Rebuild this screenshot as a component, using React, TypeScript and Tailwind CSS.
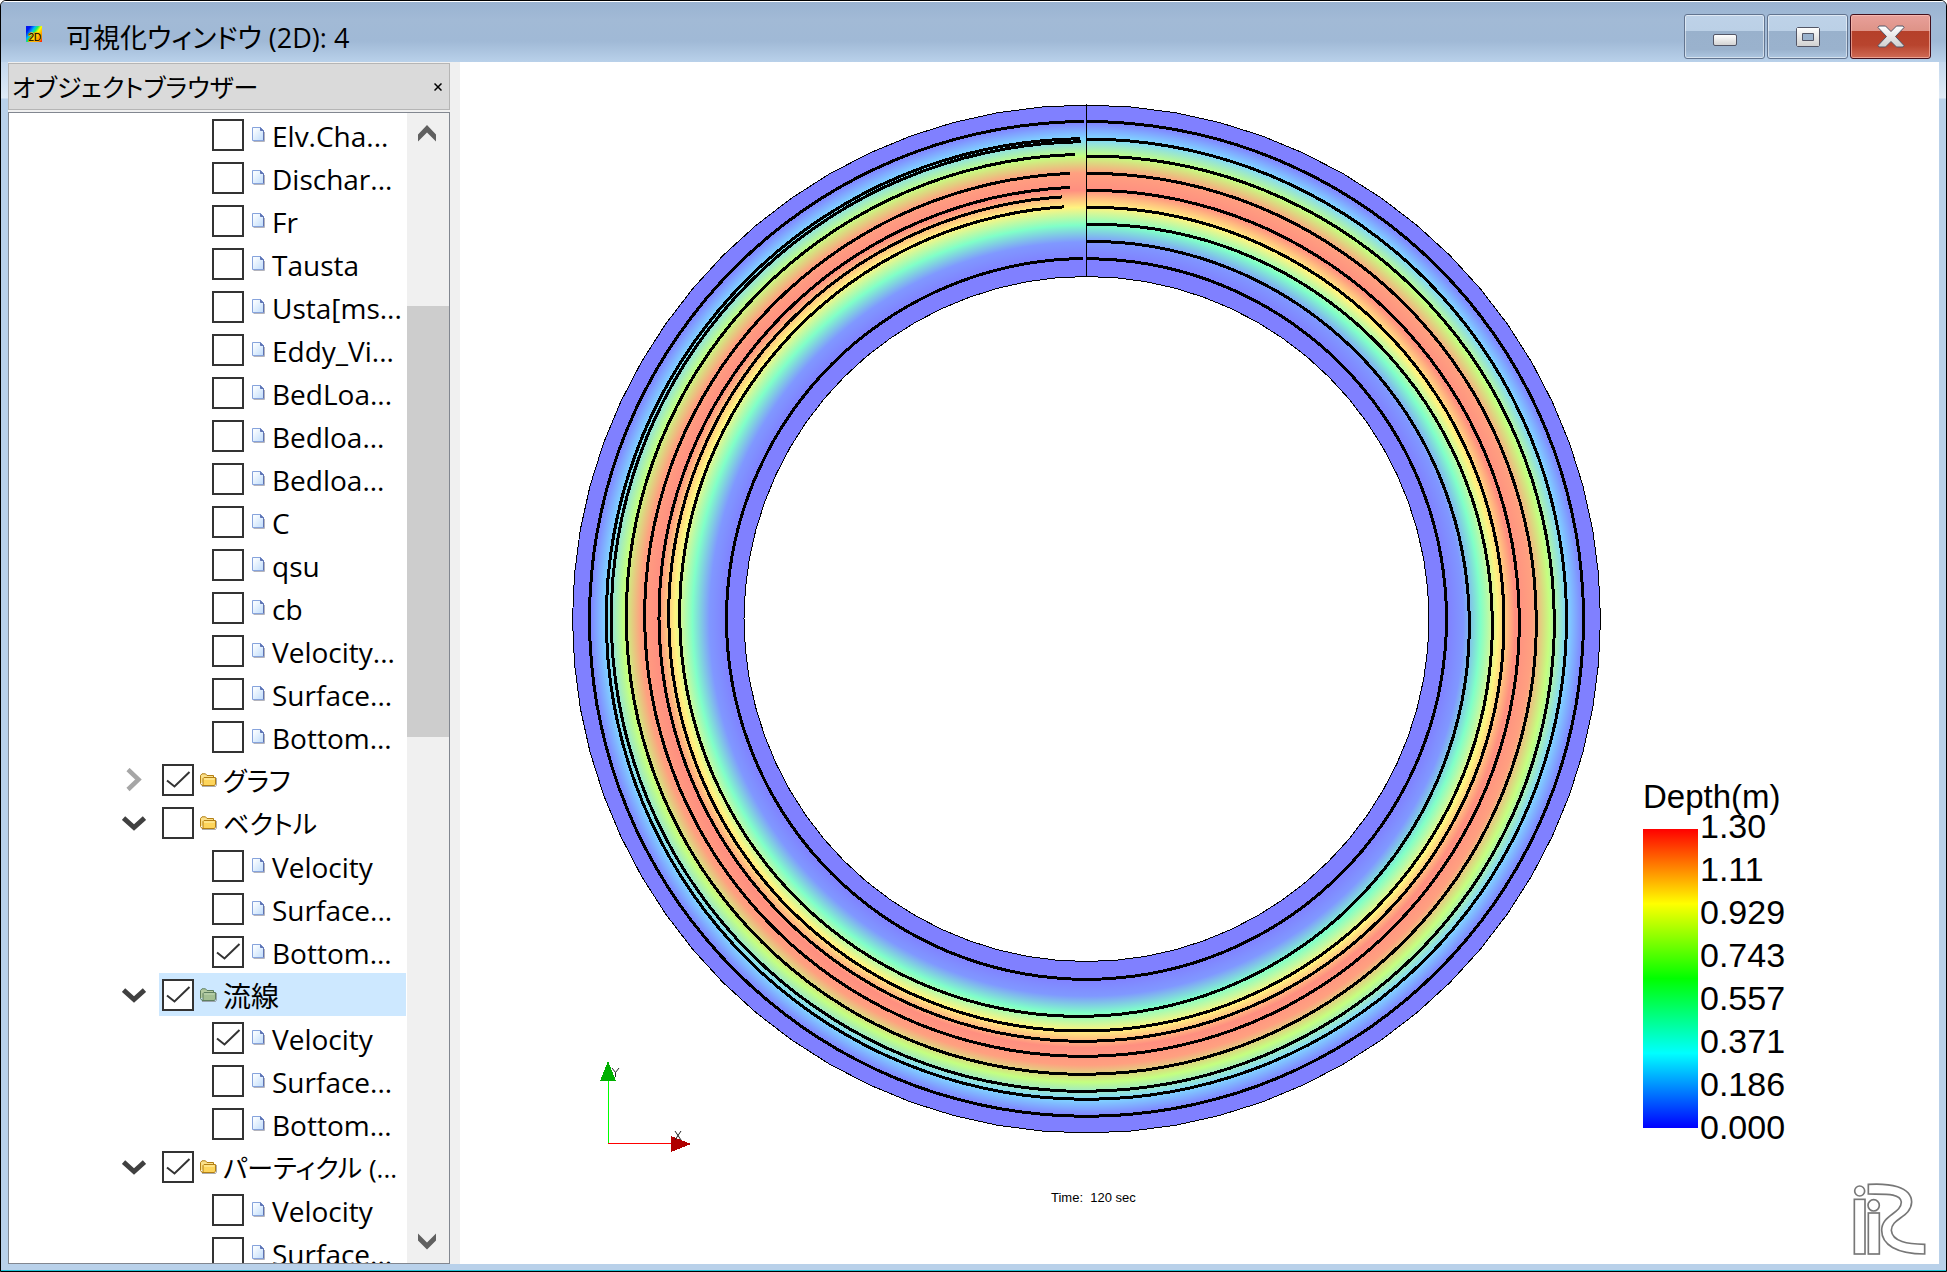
import React from "react";

type Row = {
  kind: "leaf" | "folder";
  label: string;
  checked?: boolean;
  open?: boolean;
  selected?: boolean;
};

const leaf = (label: string, checked = false): Row => ({ kind: "leaf", label, checked });

const rows: Row[] = [
  leaf("Elv.Cha..."),
  leaf("Dischar..."),
  leaf("Fr"),
  leaf("Tausta"),
  leaf("Usta[ms..."),
  leaf("Eddy_Vi..."),
  leaf("BedLoa..."),
  leaf("Bedloa..."),
  leaf("Bedloa..."),
  leaf("C"),
  leaf("qsu"),
  leaf("cb"),
  leaf("Velocity..."),
  leaf("Surface..."),
  leaf("Bottom..."),
  { kind: "folder", label: "グラフ", checked: true, open: false },
  { kind: "folder", label: "ベクトル", open: true },
  leaf("Velocity"),
  leaf("Surface..."),
  leaf("Bottom...", true),
  { kind: "folder", label: "流線", checked: true, open: true, selected: true },
  leaf("Velocity", true),
  leaf("Surface..."),
  leaf("Bottom..."),
  { kind: "folder", label: "パーティクル (...", checked: true, open: true },
  leaf("Velocity"),
  leaf("Surface..."),
];

const legend = ["1.30", "1.11", "0.929", "0.743", "0.557", "0.371", "0.186", "0.000"];

/* ---------- flow plot geometry ---------- */

const CX = 1086.5;
const CY = 619;
const OUTER = 514;
const INNER = 342.5;

// Radius of each streamline at 0, 90, 180, 270 and 360 degrees clockwise from the top.
const streams: { r: number[]; end: number }[] = [
  { r: [497.5, 497, 497.3, 497, 497.5], end: 359.7 },
  { r: [480, 480, 480.3, 480.2, 480.3], end: 359.2 },
  { r: [463, 467.8, 472.3, 475.2, 477.3], end: 359.3 },
  { r: [445.7, 449.8, 455.3, 460.2, 464.7], end: 358.6 },
  { r: [428.7, 432.8, 437.3, 441.8, 446], end: 357.9 },
  { r: [411.7, 417.5, 422.3, 427.5, 432], end: 357.8 },
  { r: [394.7, 405.8, 412, 417.8, 423], end: 356.7 },
  { r: [377.7, 382.8, 397.3, 406.8, 413], end: 356.9 },
  { r: [360.3, 360, 360.3, 360, 360.5], end: 359.5 },
];

const point = (deg: number, r: number) => {
  const a = (deg * Math.PI) / 180;
  return `${(CX + r * Math.sin(a)).toFixed(1)},${(CY - r * Math.cos(a)).toFixed(1)}`;
};

function radiusAt(r: number[], deg: number) {
  const i = Math.min(3, Math.floor(deg / 90));
  const t = deg / 90 - i;
  const p1 = r[i];
  const p2 = r[i + 1];
  const m1 = i > 0 ? (p2 - r[i - 1]) / 2 : p2 - p1;
  const m2 = i < 3 ? (r[i + 2] - p1) / 2 : p2 - p1;
  const t2 = t * t;
  const t3 = t2 * t;
  return (
    (2 * t3 - 3 * t2 + 1) * p1 + (t3 - 2 * t2 + t) * m1 + (3 * t2 - 2 * t3) * p2 + (t3 - t2) * m2
  );
}

function streamPoints(s: { r: number[]; end: number }) {
  const pts: string[] = [];
  for (let d = 0; d < s.end; d += 2.5) pts.push(point(d, radiusAt(s.r, d)));
  pts.push(point(s.end, radiusAt(s.r, s.end)));
  return pts.join(" ");
}

const ring = (r: number) =>
  "M" + Array.from({ length: 72 }, (_, i) => point(i * 5, r)).join("L") + "Z";

const depthStops: [number, string][] = [
  [342.5, "#8080ff"],
  [360, "#8080ff"],
  [377, "#8098ff"],
  [394, "#80ffc8"],
  [411.5, "#fff480"],
  [428.7, "#ff8f80"],
  [446, "#ffa080"],
  [463, "#c4ff80"],
  [480, "#80d8ff"],
  [497, "#8080ff"],
  [514, "#8080ff"],
];

function FlowPlot() {
  return (
    <svg className="block h-full w-full" viewBox="460 62 1479 1202" role="img" aria-label="Depth and streamlines">
      <defs>
        <radialGradient id="depth" gradientUnits="userSpaceOnUse" cx={CX} cy={CY} r={OUTER}>
          {depthStops.map(([r, c]) => (
            <stop key={r} offset={r / OUTER} stopColor={c} />
          ))}
        </radialGradient>
      </defs>
      <path d={ring(OUTER) + ring(INNER)} fill="url(#depth)" fillRule="evenodd" stroke="#000" strokeWidth="1" shapeRendering="crispEdges" />
      <path d="M1086.5 104V277" stroke="#000" strokeWidth="1" shapeRendering="crispEdges" />
      <g fill="none" stroke="#000" strokeWidth="3" shapeRendering="crispEdges">
        {streams.map((s, i) => (
          <polyline key={i} points={streamPoints(s)} />
        ))}
      </g>
      <g shapeRendering="crispEdges">
        <path d="M608.5 1144V1080" stroke="#00ff00" />
        <path d="M608 1143.5H672" stroke="#ff0000" />
        <path d="M608 1061L616 1081H600Z" fill="#00b000" />
        <path d="M691 1144L671 1136V1152Z" fill="#b00000" />
      </g>
      <g fill="none" stroke="#222" strokeWidth="1">
        <path d="M612 1068L615.5 1072.5L619 1068M615.5 1072.5V1077" />
        <path d="M675 1131L681 1140M681 1131L675 1140" />
      </g>
    </svg>
  );
}

/* ---------- icons ---------- */

function PageIcon() {
  return (
    <svg width="13" height="15" viewBox="0 0 13 15" className="shrink-0" aria-hidden="true">
      <defs>
        <linearGradient id="page" x1="0" y1="0" x2="1" y2="1">
          <stop offset="0.2" stopColor="#f6fbff" />
          <stop offset="1" stopColor="#bfdcfb" />
        </linearGradient>
      </defs>
      <path d="M1.5 14.5H12.5V5" fill="none" stroke="#b4b4bc" />
      <path d="M.5.5H8.5L11.5 3.5V13.5H.5Z" fill="url(#page)" stroke="#86a3dc" />
      <path d="M8.5.5V3.5H11.5V13.5" fill="none" stroke="#5f74b4" />
      <path d="M8.5.5L11.5 3.5H8.5Z" fill="#5f74b4" />
    </svg>
  );
}

function FolderIcon({ tinted }: { tinted?: boolean }) {
  const edge = tinted ? "#5f7f60" : "#b37f14";
  const back = tinted ? "#b5cba0" : "#fbe08a";
  const front = tinted ? "#a4bf93" : "#fdd55c";
  const shine = tinted ? "#c4d8b8" : "#fff3b4";
  return (
    <svg width="17" height="14" viewBox="0 0 17 14" className="shrink-0" aria-hidden="true">
      <path d="M2 13.5H15.5L16.5 12V5" fill="none" stroke="#777" strokeOpacity=".6" />
      <path d="M.5 10.5V2.5L2 .8H5.5L7 2.5H13.5V4.5" fill={back} stroke={edge} />
      <path d="M.5 10.5L2 12.5H14.5L15.5 11V4.5H4L3 5.5V12" fill={front} stroke={edge} />
      <path d="M4 6H14.5" stroke={shine} />
    </svg>
  );
}

function Chevron({ open }: { open?: boolean }) {
  return (
    <svg width="24" height="24" viewBox="0 0 24 24" className="block" aria-hidden="true">
      {open ? (
        <path d="M1.5 7L12 16.5L22.5 7" fill="none" stroke="#404040" strokeWidth="5" />
      ) : (
        <path d="M6 1.5L16.5 11.5L6 21.5" fill="none" stroke="#a6a6a6" strokeWidth="4.5" />
      )}
    </svg>
  );
}

function AppIcon() {
  return (
    <svg width="16" height="16" viewBox="0 0 16 16" className="shrink-0" aria-hidden="true">
      <defs>
        <linearGradient id="spectrum" x1="0" y1="0.1" x2="1" y2="0.8">
          <stop offset="0.15" stopColor="#0018f0" />
          <stop offset="0.35" stopColor="#00b0ff" />
          <stop offset="0.48" stopColor="#20f060" />
          <stop offset="0.62" stopColor="#ffff00" />
          <stop offset="0.85" stopColor="#ff9000" />
          <stop offset="1" stopColor="#ff3000" />
        </linearGradient>
      </defs>
      <rect width="16" height="16" fill="url(#spectrum)" />
      <text x="2.5" y="15" fontSize="10" fontFamily="Liberation Sans, sans-serif" stroke="#ffb000" strokeWidth="1.5" paintOrder="stroke" fill="#000">
        2D
      </text>
    </svg>
  );
}

function Logo() {
  return (
    <svg width="75" height="74" viewBox="95 95 225 222" aria-label="iRIC" role="img" className="block">
      <g fill="#fff" stroke="#777" strokeWidth="5">
        <circle cx="118" cy="122" r="15" />
        <rect x="102" y="147" width="32" height="164" />
        <circle cx="160" cy="165" r="17" />
        <rect x="144" y="188" width="33" height="123" />
        <path d="M144 102C205 98 273 108 274 155C272 202 213 203 213 240C216 274 262 281 313 282V311C228 311 184 283 184 240C184 194 243 190 243 155C240 127 190 132 144 131Z" />
      </g>
    </svg>
  );
}

/* ---------- widgets ---------- */

function TreeRow({ row, id }: { row: Row; id: string }) {
  const folder = row.kind === "folder";
  const kana = folder && !row.selected;
  return (
    <li className={folder ? "flex h-[43px] shrink-0 pl-[113px]" : "flex h-[43px] shrink-0 pl-[203px]"}>
      {folder && (
        <button type="button" aria-label={row.open ? "Collapse" : "Expand"} className="mr-[13px] flex w-6 items-center">
          <Chevron open={row.open} />
        </button>
      )}
      <div
        className={
          row.selected
            ? "mr-px flex min-w-0 flex-1 items-center bg-[#cde8ff] pl-[3px]"
            : folder
              ? "mr-px flex min-w-0 flex-1 items-center pl-[3px]"
              : "flex min-w-0 flex-1 items-center"
        }
      >
        <span className="grid shrink-0">
          <input
            id={id}
            type="checkbox"
            defaultChecked={row.checked}
            className="peer col-start-1 row-start-1 h-8 w-8 appearance-none border-2 border-[#333] bg-white"
          />
          <svg viewBox="0 0 32 32" className="pointer-events-none invisible col-start-1 row-start-1 h-8 w-8 peer-checked:visible" aria-hidden="true">
            <path d="M5 16.5L12.5 22.5L27.5 8" fill="none" stroke="#333" strokeWidth="2" />
          </svg>
        </span>
        <label htmlFor={id} className={folder ? "flex min-w-0 items-center gap-1.5 pl-1.5" : "flex min-w-0 items-center gap-[7px] pl-2"}>
          {folder ? <FolderIcon tinted={row.selected} /> : <PageIcon />}
          <span className={kana ? "whitespace-nowrap pt-0.5 text-[26px] leading-9" : "whitespace-nowrap pt-0.5 text-[28px] leading-9"}>
            {row.label}
          </span>
        </label>
      </div>
    </li>
  );
}

const glass =
  "flex h-[45px] w-[81px] items-center justify-center rounded-[3px] border border-[#62748f] shadow-[inset_0_0_0_1px_rgba(255,255,255,0.5)] bg-[linear-gradient(#bed2e8_0%,#bbd0e6_37%,#99b1cc_38%,#9ab2cd_80%,#adc6e0_100%)]";

export default function App() {
  return (
    <div className="flex h-screen flex-col overflow-hidden rounded-t-md border border-black bg-[#b9d1ea] font-['Open_Sans','Noto_Sans_CJK_JP',sans-serif] text-black [font-feature-settings:'palt']">
      <header className="flex h-[61px] shrink-0 border-t border-white bg-[linear-gradient(#9ab3d1_0%,#a2bad6_30%,#a0b9d6_65%,#b9d1ea_100%)] pl-[25px] pr-[15px]">
        <div className="flex flex-1 items-center gap-6 pt-3">
          <span className="-mt-2">
            <AppIcon />
          </span>
          <h1 className="text-[27px] leading-9">可視化ウィンドウ (2D): 4</h1>
        </div>
        <div className="flex gap-0.5 pt-3">
          <button type="button" aria-label="Minimize" className={glass}>
            <span className="mt-1.5 h-3 w-6 rounded-[2px] border border-[#535666] bg-linear-to-b from-white to-[#d4d4d4]" />
          </button>
          <button type="button" aria-label="Maximize" className={glass}>
            <svg width="24" height="20" viewBox="0 0 24 20" aria-hidden="true">
              <defs>
                <linearGradient id="silver" x1="0" y1="0" x2="0" y2="1">
                  <stop offset="0" stopColor="#fff" />
                  <stop offset="1" stopColor="#d0d0d0" />
                </linearGradient>
              </defs>
              <path d="M1.5.5H22.5L23.5 1.5V18.5L22.5 19.5H1.5L.5 18.5V1.5ZM6.5 6.5V13.5H17.5V6.5Z" fill="url(#silver)" fillRule="evenodd" stroke="#535666" />
            </svg>
          </button>
          <button
            type="button"
            aria-label="Close"
            className="flex h-[45px] w-[81px] items-center justify-center rounded-[3px] border border-[#43101c] bg-[linear-gradient(#e8a09a_0%,#de9387_37%,#b5402a_38%,#b8442e_70%,#cf6a55_100%)] shadow-[inset_0_0_0_1px_rgba(255,200,190,0.6)]"
          >
            <svg width="28" height="23" viewBox="0 0 28 23" aria-hidden="true">
              <path
                d="M2 1H8.5L14 6.5L19.5 1H26L27 2.5L18.5 11.5L27 20.5L26 22H19.5L14 16.5L8.5 22H2L1 20.5L9.5 11.5L1 2.5Z"
                fill="url(#silver)"
                stroke="#535666"
                strokeLinejoin="round"
              />
            </svg>
          </button>
        </div>
      </header>

      <div className="flex min-h-0 flex-1 border-b border-[#20c4d8] bg-[linear-gradient(#c4d8ee_0,#dfeaf6_36px,#b9d1ea_37px)] px-[7px] pb-1.5">
        <aside className="flex w-[452px] shrink-0 flex-col gap-0.5 bg-[#f0f0f0] pr-[10px] pt-px">
          <div className="flex h-[47px] shrink-0 items-center justify-between border border-[#b5b5b5] bg-[#dadada] pl-[3px] pr-[5px]">
            <h2 className="text-[25px] leading-9">オブジェクトブラウザー</h2>
            <button type="button" aria-label="Close panel" className="p-0.5">
              <svg width="8" height="8" viewBox="0 0 8 8" className="block" aria-hidden="true">
                <path d="M.5.5L7.5 7.5M7.5.5L.5 7.5" stroke="#000" strokeWidth="1.5" />
              </svg>
            </button>
          </div>
          <div className="flex min-h-0 flex-1 border border-[#828790] bg-white">
            <ul className="flex min-w-0 flex-1 flex-col overflow-hidden">
              {rows.map((row, i) => (
                <TreeRow key={i} row={row} id={`item-${i}`} />
              ))}
            </ul>
            <div className="flex w-[42px] shrink-0 flex-col bg-[#f0f0f0]">
              <button type="button" aria-label="Scroll up" className="flex h-10 shrink-0 items-center justify-center pr-0.5">
                <svg width="18" height="17" viewBox="0 0 18 17" aria-hidden="true">
                  <path d="M0 9.5L9 0L18 9.5V16.5L9 7.5L0 16.5Z" fill="#606060" />
                </svg>
              </button>
              <div className="flex min-h-0 flex-1 flex-col">
                <div className="grow-[153]" />
                <div className="grow-[432] bg-[#cdcdcd]" />
                <div className="grow-[483]" />
              </div>
              <button type="button" aria-label="Scroll down" className="flex h-[43px] shrink-0 items-center justify-center pr-0.5">
                <svg width="18" height="17" viewBox="0 0 18 17" aria-hidden="true">
                  <path d="M0 7.5L9 16.5L18 7.5V.5L9 9.5L0 .5Z" fill="#606060" />
                </svg>
              </button>
            </div>
          </div>
        </aside>

        <main className="relative min-w-0 flex-1 bg-white font-['Liberation_Sans',sans-serif]">
          <FlowPlot />
          <section aria-label="Legend" className="absolute bottom-[115px] right-[146px] w-[150px]">
            <h3 className="text-[33px] leading-6">Depth(m)</h3>
            <div className="-mt-1 flex">
              <div className="mb-[21px] mt-6 w-[55px] bg-[linear-gradient(#f00,#ff0,#0f0,#0ff,#00f)]" />
              <ul className="pl-0.5 text-[34px] leading-[43px]">
                {legend.map((v) => (
                  <li key={v}>{v}</li>
                ))}
              </ul>
            </div>
          </section>
          <p className="absolute bottom-[56px] left-[591px] whitespace-pre text-[13px] leading-5">Time:  120 sec</p>
          <div className="absolute bottom-2 right-3">
            <Logo />
          </div>
        </main>
      </div>
    </div>
  );
}
